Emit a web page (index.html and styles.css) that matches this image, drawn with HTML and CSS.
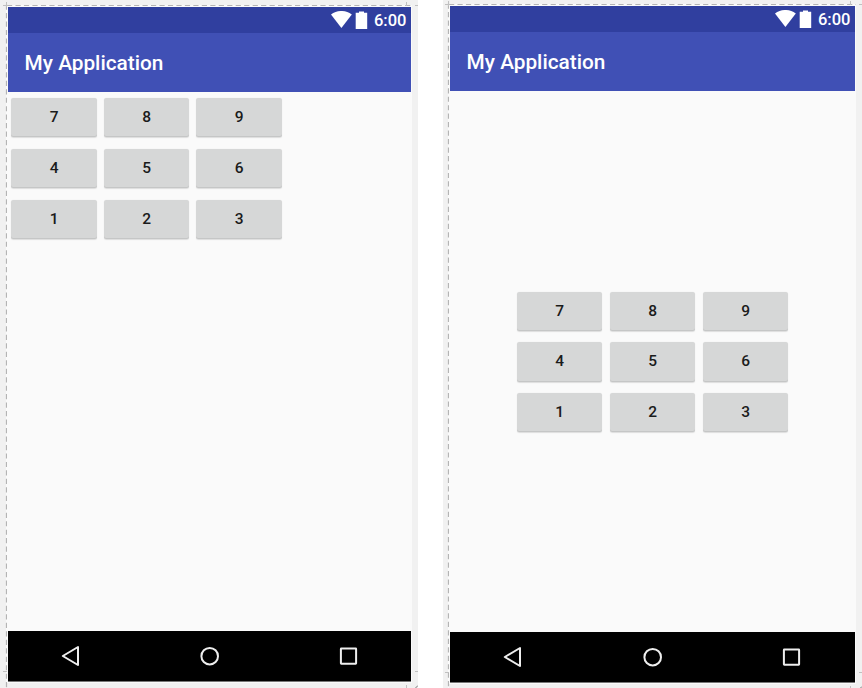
FILE: index.html
```
<!DOCTYPE html>
<html lang="en">
<head>
<meta charset="utf-8">
<title>My Application</title>
<link rel="stylesheet" href="styles.css">
</head>
<body>
<svg class="symbols" width="0" height="0" aria-hidden="true">
  <symbol id="status" viewBox="0 0 38 20">
    <path d="M0 3.5C6.2-1.2 14.6-1.2 20.800 3.500L10.400 17Z" fill="#fff"/>
    <path d="M28 .5h5v1.300h3.200v16.200h-11.500v-16.200h3.300z" fill="#fff"/>
  </symbol>
  <symbol id="back" viewBox="0 0 24 24"><path d="M19 3v18L3.800 12z"/></symbol>
  <symbol id="home" viewBox="0 0 24 24"><circle cx="11.700" cy="12.200" r="8.300"/></symbol>
  <symbol id="recent" viewBox="0 0 24 24"><rect x="3.900" y="4.500" width="15.200" height="15.200" rx=".4"/></symbol>
</svg>
<main class="board">
  <section class="panel first">
    <svg class="guides" width="418" height="688">
      <path class="edge" d="M6.500 5V688M7 5.500H412"/>
      <path class="dash" d="M6.500 4.500V688M7 5.500H412"/>
      <path class="tick" d="M3 5.500h5M6.500 2v5M406.500 2v4M415 5.500h3M3 671.500h5M415 671.500h3M406.500 685v3"/>
      <path class="grip" d="M415.500 688l2.500-2.500"/>
    </svg>
    <div class="screen">
      <header class="status"><svg class="signals"><use href="#status"/></svg><span>6:00</span></header>
      <h1 class="appbar">My Application</h1>
      <div class="content">
        <div class="keys">
          <button>7</button><button>8</button><button>9</button>
          <button>4</button><button>5</button><button>6</button>
          <button>1</button><button>2</button><button>3</button>
        </div>
      </div>
      <nav class="nav"><svg><use href="#back"/></svg><svg><use href="#home"/></svg><svg><use href="#recent"/></svg></nav>
    </div>
  </section>
  <section class="panel second">
    <svg class="guides" width="419" height="688">
      <path class="edge" d="M5.500 4V688M6 4.500H413"/>
      <path class="dash" d="M5.500 3.500V688M6 4.500H413"/>
      <path class="tick" d="M2 4.500h5M5.500 1v5M407.500 1v4M416 4.500h3M2 672.500h5M416 672.500h3M407.500 686v2"/>
      <path class="grip" d="M417.500 688l1.500-1.500"/>
    </svg>
    <div class="screen">
      <header class="status"><svg class="signals"><use href="#status"/></svg><span>6:00</span></header>
      <h1 class="appbar">My Application</h1>
      <div class="content">
        <div class="keys">
          <button>7</button><button>8</button><button>9</button>
          <button>4</button><button>5</button><button>6</button>
          <button>1</button><button>2</button><button>3</button>
        </div>
      </div>
      <nav class="nav"><svg><use href="#back"/></svg><svg><use href="#home"/></svg><svg><use href="#recent"/></svg></nav>
    </div>
  </section>
</main>
</body>
</html>
```
FILE: styles.css
```
* { box-sizing: border-box; }
body { margin: 0; background: #fff; font-family: Roboto, sans-serif; overflow: hidden; }
.symbols { position: absolute; }
.board { display: flex; justify-content: space-between; width: 862px; height: 688px; }
.panel { position: relative; height: 688px; background: #f1f1f1; }
.first { width: 418px; padding: 7px 6.600px 6px 8px; }
.second { width: 419px; padding: 6px 6.600px 5px 7px; }
.guides { position: absolute; left: 0; top: 0; fill: none; }
.edge { stroke: #fafafa; }
.dash { stroke: #b4b4b4; stroke-width: 1.200; stroke-dasharray: 5.200 3.270; }
.tick { stroke: #c0c0c0; }
.grip { stroke: #777; }
.screen { position: relative; display: flex; flex-direction: column; height: 675px; background: #fafafa; box-shadow: 0 0 0 1px #fafafa; }
.second .screen { height: 677px; }
.status { display: flex; height: 26px; flex: none; justify-content: flex-end; align-items: flex-start; padding: 4px 5px 0 0; background: #303f9f; color: #fff; font-size: 16.500px; font-weight: 500; line-height: 20px; }
.signals { width: 38px; height: 20px; margin-right: 4.500px; }
.appbar { display: flex; flex: none; align-items: center; height: 59px; margin: 0; padding-left: 16.600px; background: #4050b5; color: #fff; font-size: 20.800px; font-weight: 500; line-height: 24px; }
.content { flex: 1; padding: 6px 0 0 3.400px; }
.second .content { display: flex; align-items: center; justify-content: center; padding: 1px 0 0; }
.keys { display: grid; grid-template-columns: repeat(3, 85.500px); grid-auto-rows: 39.300px; gap: 11.500px 7px; width: max-content; }
.second .keys { column-gap: 7.500px; }
button { border: 0; padding: 0 0 1px; border-radius: 2.500px; background: #d6d7d7; box-shadow: inset 0 -1px #c5c6c6, 0 .5px 1px #ddd; color: #1b1b1b; font: 500 15.500px/20px Roboto, sans-serif; }
.nav { display: flex; flex: none; justify-content: center; align-items: center; gap: 115px; height: 51px; background: #000; border-bottom: 1px solid #777; }
.second .nav { gap: 115.500px; }
.nav svg { width: 24px; height: 24px; fill: none; stroke: #eee; stroke-width: 2; stroke-linejoin: round; }
```
